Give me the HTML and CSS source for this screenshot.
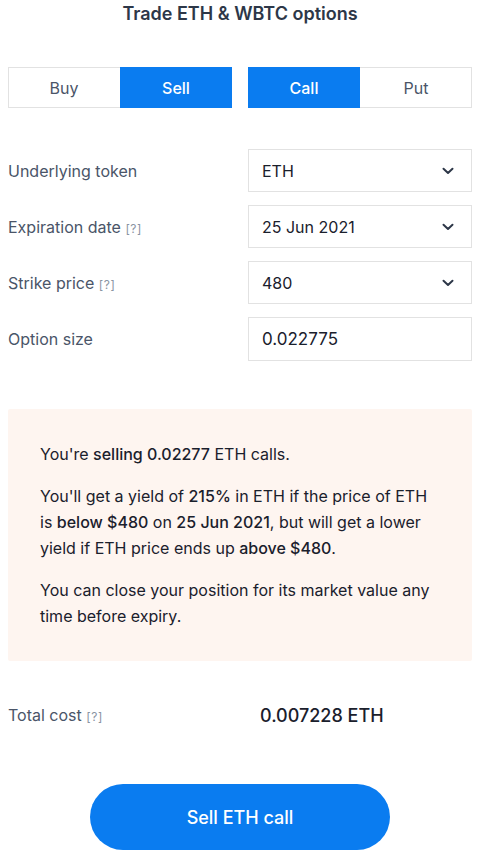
FILE: index.html
```html
<!DOCTYPE html>
<html>
<head>
<meta charset="utf-8">
<link rel="stylesheet" href="styles.css">
</head>
<body>
<div class="page">
  <h1 class="title">Trade ETH &amp; WBTC options</h1>
  <div class="toggles">
    <div class="seg">
      <div class="seg-btn">Buy</div>
      <div class="seg-btn active">Sell</div>
    </div>
    <div class="seg">
      <div class="seg-btn active">Call</div>
      <div class="seg-btn">Put</div>
    </div>
  </div>
  <div class="form">
    <div class="row">
      <div class="label">Underlying token</div>
      <div class="field select"><span>ETH</span><svg class="chev" width="12" height="8" viewBox="0 0 12 8"><path d="M1.5 1.8 L6 6 L10.5 1.8" fill="none" stroke="#2d3748" stroke-width="2" stroke-linecap="round" stroke-linejoin="round"/></svg></div>
    </div>
    <div class="row">
      <div class="label">Expiration date <span class="q">[?]</span></div>
      <div class="field select"><span>25 Jun 2021</span><svg class="chev" width="12" height="8" viewBox="0 0 12 8"><path d="M1.5 1.8 L6 6 L10.5 1.8" fill="none" stroke="#2d3748" stroke-width="2" stroke-linecap="round" stroke-linejoin="round"/></svg></div>
    </div>
    <div class="row">
      <div class="label">Strike price <span class="q">[?]</span></div>
      <div class="field select"><span>480</span><svg class="chev" width="12" height="8" viewBox="0 0 12 8"><path d="M1.5 1.8 L6 6 L10.5 1.8" fill="none" stroke="#2d3748" stroke-width="2" stroke-linecap="round" stroke-linejoin="round"/></svg></div>
    </div>
    <div class="row">
      <div class="label">Option size</div>
      <div class="field input"><span>0.022775</span></div>
    </div>
  </div>
  <div class="info">
    <p>You're <b>selling 0.02277</b> ETH calls.</p>
    <p>You'll get a yield of <b>215%</b> in ETH if the price of ETH is <b>below $480</b> on <b>25 Jun 2021</b>, but will get a lower yield if ETH price ends up <b>above $480</b>.</p>
    <p>You can close your position for its market value any time before expiry.</p>
  </div>
  <div class="total">
    <div class="label">Total cost <span class="q">[?]</span></div>
    <div class="total-val">0.007228 ETH</div>
  </div>
  <div class="cta-wrap">
    <button class="cta">Sell ETH call</button>
  </div>
</div>
</body>
</html>
```
FILE: styles.css
```css
* { box-sizing: border-box; }
html, body { margin: 0; padding: 0; background: #fff; }
body {
  font-family: Inter, "Noto Sans", "Liberation Sans", sans-serif;
  color: #1a202c;
}
.page {
  width: 479px;
  padding: 0 7px 0 8px;
}
.title {
  margin: 0;
  padding-top: 2px;
  height: 30px;
  font-size: 18px;
  font-weight: 600;
  color: #2d3748;
  text-align: center;
  line-height: 24px;
}
.toggles {
  margin-top: 37px;
  display: flex;
  gap: 16px;
}
.seg {
  flex: 1;
  display: flex;
  height: 41px;
  border: 1px solid #e2e2e2;
}
.seg-btn {
  flex: 1;
  display: flex;
  align-items: center;
  justify-content: center;
  font-size: 16px;
  color: #4a5568;
  margin: -1px 0;
}
.seg-btn:first-child { margin-left: -1px; }
.seg-btn:last-child { margin-right: -1px; }
.seg-btn.active {
  background: #0a7cf0;
  color: #fff;
  font-weight: 500;
}
.form {
  margin-top: 41px;
  display: flex;
  flex-direction: column;
  gap: 13px;
}
.row {
  display: flex;
  align-items: center;
}
.label {
  width: 240px;
  font-size: 16px;
  color: #4a5568;
}
.q {
  font-size: 12px;
  color: #8a94a3;
  letter-spacing: 0.6px;
}
.field {
  flex: 1;
  height: 43px;
  border: 1px solid #e2e2e2;
  display: flex;
  align-items: center;
  padding: 0 17px 0 13px;
  font-size: 16px;
  color: #1a202c;
}
.field.input { height: 44px; font-size: 17px; }
.select { justify-content: space-between; }
.chev { display: block; }
.info {
  margin-top: 48px;
  background: #fef5f0;
  border-radius: 2px;
  padding: 32px 32px 30px 32px;
  height: 252px;
  font-size: 16px;
  line-height: 26px;
  color: #1a202c;
}
.info p { margin: 0 0 16px 0; }
.info p:last-child { margin-bottom: 0; }
.info b { font-weight: 500; }
.total {
  margin-top: 42px;
  display: flex;
  align-items: center;
  height: 24px;
}
.total-val {
  padding-left: 12px;
  font-size: 18px;
  font-weight: 500;
  color: #1a202c;
}
.cta-wrap {
  display: flex;
  justify-content: center;
  margin-top: 57px;
}
.cta {
  width: 300px;
  height: 66px;
  border: none;
  border-radius: 33px;
  background: #0a7cf0;
  color: #fff;
  font-family: inherit;
  font-size: 18px;
  font-weight: 500;
  cursor: pointer;
}
```
